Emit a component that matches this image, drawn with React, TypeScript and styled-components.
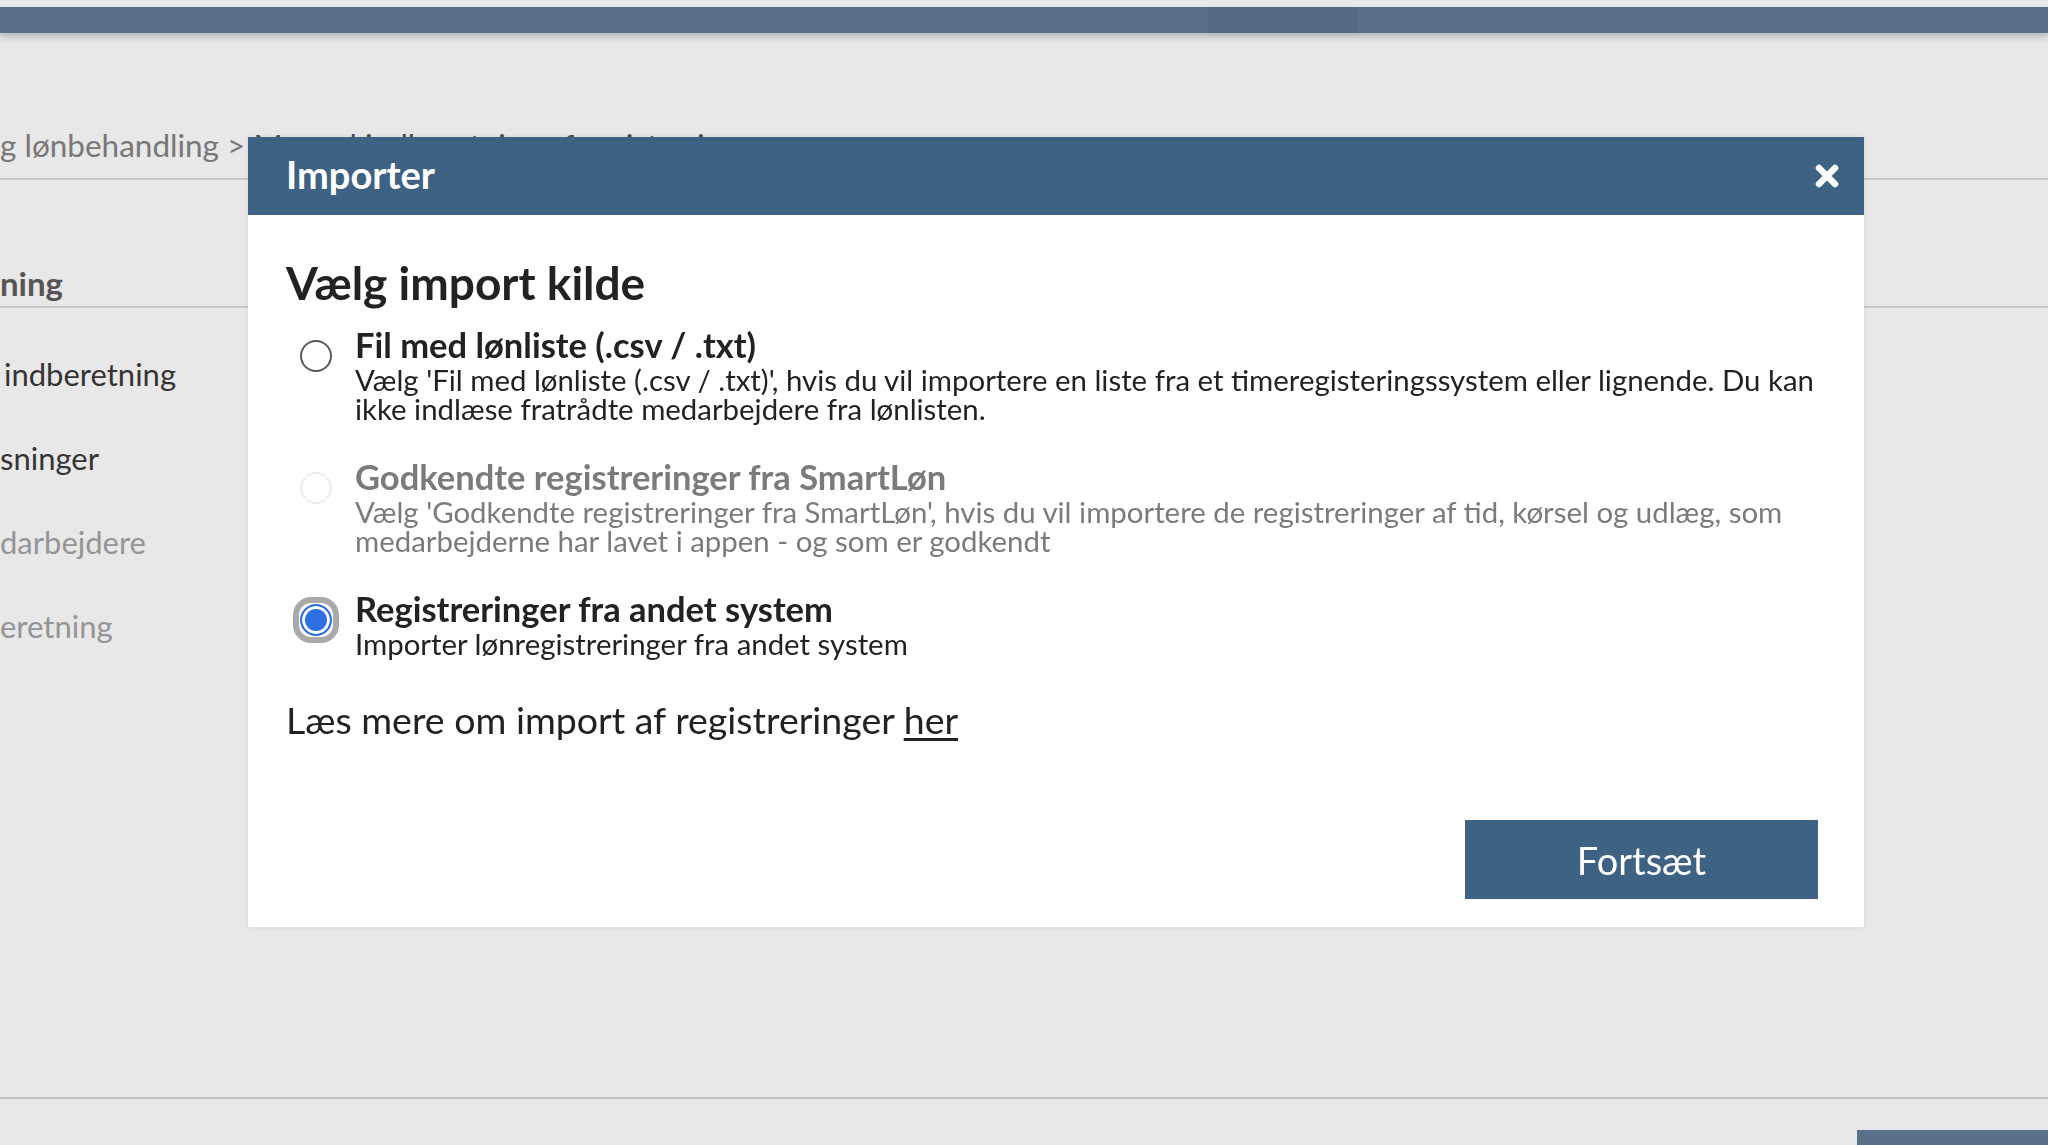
import styled, { createGlobalStyle } from 'styled-components';

const GlobalStyle = createGlobalStyle`
  html, body {
    margin: 0;
    padding: 0;
  }
  body {
    font-family: Lato, 'Open Sans', sans-serif;
    background: #ffffff;
    overflow: hidden;
  }
  * {
    box-sizing: border-box;
  }
`;

const menuItems = [
  { label: 'indberetning', muted: false, indent: 4 },
  { label: 'sninger', muted: false, indent: 0 },
  { label: 'darbejdere', muted: true, indent: 0 },
  { label: 'eretning', muted: true, indent: 0 },
];

const options = [
  {
    title: 'Fil med lønliste (.csv / .txt)',
    text: "Vælg 'Fil med lønliste (.csv / .txt)', hvis du vil importere en liste fra et timeregisteringssystem eller lignende. Du kan ikke indlæse fratrådte medarbejdere fra lønlisten.",
    checked: false,
    disabled: false,
  },
  {
    title: 'Godkendte registreringer fra SmartLøn',
    text: "Vælg 'Godkendte registreringer fra SmartLøn', hvis du vil importere de registreringer af tid, kørsel og udlæg, som medarbejderne har lavet i appen - og som er godkendt",
    checked: false,
    disabled: true,
  },
  {
    title: 'Registreringer fra andet system',
    text: 'Importer lønregistreringer fra andet system',
    checked: true,
    disabled: false,
  },
];

export default function App() {
  return (
    <>
      <GlobalStyle />
      <Page>
        <TopBar>
          <NavSegment />
          <NavSegment active />
          <NavSegment grow />
        </TopBar>
        <Breadcrumb>
          g lønbehandling &gt; <CrumbLink>Manuel indberetning af registreringer</CrumbLink>
        </Breadcrumb>
        <SectionTitle>ning</SectionTitle>
        <Menu>
          {menuItems.map(item => (
            <MenuItem key={item.label} muted={item.muted} indent={item.indent}>
              {item.label}
            </MenuItem>
          ))}
        </Menu>
        <PageFooter>
          <FooterButton />
        </PageFooter>
      </Page>

      <Overlay>
        <Modal>
          <ModalHeader>
            <ModalTitle>Importer</ModalTitle>
            <CloseButton aria-label="Luk">
              <svg width="26" height="26" viewBox="0 0 26 26">
                <path
                  d="M5 5 L21 21 M21 5 L5 21"
                  stroke="#ffffff"
                  strokeWidth="6.5"
                  strokeLinecap="round"
                />
              </svg>
            </CloseButton>
          </ModalHeader>
          <ModalBody>
            <Heading>Vælg import kilde</Heading>
            <OptionList>
              {options.map(opt => (
                <Option key={opt.title} disabled={opt.disabled}>
                  <Radio checked={opt.checked} disabled={opt.disabled} />
                  <div>
                    <OptionTitle>{opt.title}</OptionTitle>
                    <OptionText>{opt.text}</OptionText>
                  </div>
                </Option>
              ))}
            </OptionList>
            <ReadMore>
              Læs mere om import af registreringer <a href="#">her</a>
            </ReadMore>
            <ModalFooter>
              <PrimaryButton>Fortsæt</PrimaryButton>
            </ModalFooter>
          </ModalBody>
        </Modal>
      </Overlay>
    </>
  );
}

const Page = styled.div`
  height: 1145px;
  display: flex;
  flex-direction: column;
  padding-top: 7px;
`;

const TopBar = styled.div`
  height: 26px;
  display: flex;
  box-shadow: 0 4px 6px rgba(0, 0, 0, 0.22);
`;

const NavSegment = styled.div<{ active?: boolean; grow?: boolean }>`
  width: ${props => (props.active ? '150px' : '1208px')};
  flex: ${props => (props.grow ? 1 : 'none')};
  background: ${props => (props.active ? '#5d7592' : '#637b97')};
`;

const Breadcrumb = styled.div`
  height: 147px;
  display: flex;
  align-items: flex-end;
  padding-bottom: 15px;
  border-bottom: 2px solid #dcdcdc;
  font-size: 31.5px;
  line-height: 36px;
  color: #848484;
  white-space: pre;
`;

const CrumbLink = styled.span`
  color: #555555;
`;

const SectionTitle = styled.div`
  height: 128px;
  display: flex;
  align-items: flex-end;
  padding-bottom: 3px;
  border-bottom: 2px solid #dcdcdc;
  font-size: 33px;
  line-height: 40px;
  font-weight: 700;
  color: #5e5e5e;
`;

const Menu = styled.ul`
  list-style: none;
  margin: 0;
  padding: 24px 0 0;
`;

const MenuItem = styled.li<{ muted: boolean; indent: number }>`
  height: 84px;
  display: flex;
  align-items: center;
  padding-left: ${props => `${props.indent}px`};
  font-size: 31px;
  color: ${props => (props.muted ? '#a4a4a4' : '#3a3a3a')};
`;

const PageFooter = styled.div`
  margin-top: auto;
  height: 48px;
  border-top: 2px solid #d6d6d6;
  display: flex;
  justify-content: flex-end;
  align-items: flex-end;
`;

const FooterButton = styled.div`
  width: 191px;
  height: 15px;
  background: #637b97;
`;

const Overlay = styled.div`
  position: fixed;
  inset: 0;
  background: rgba(0, 0, 0, 0.09);
`;

const Modal = styled.div`
  position: absolute;
  left: 248px;
  top: 137px;
  width: 1616px;
  background: #ffffff;
  box-shadow: 0 0 6px rgba(0, 0, 0, 0.08);
`;

const ModalHeader = styled.div`
  height: 78px;
  background: #3d6283;
  display: flex;
  align-items: center;
  justify-content: space-between;
  padding: 0 24px 4px 38px;
`;

const ModalTitle = styled.h2`
  margin: 0;
  font-size: 38px;
  font-weight: 700;
  color: #ffffff;
`;

const CloseButton = styled.button`
  background: none;
  border: none;
  padding: 4px 0 0;
  display: flex;
  cursor: pointer;
`;

const ModalBody = styled.div`
  padding: 40px 46px 28px 38px;
`;

const Heading = styled.h1`
  margin: 0 0 17px;
  font-size: 46px;
  line-height: 55px;
  font-weight: 700;
  color: #222222;
`;

const OptionList = styled.div`
  display: flex;
  flex-direction: column;
  gap: 36px;
`;

const Option = styled.label<{ disabled: boolean }>`
  display: grid;
  grid-template-columns: 32px 1fr;
  column-gap: 23px;
  padding-left: 14px;
  color: ${props => (props.disabled ? '#7b7b7b' : '#222222')};
`;

const Radio = styled.span<{ checked: boolean; disabled: boolean }>`
  position: relative;
  width: 32px;
  height: 32px;
  margin-top: 13px;
  border-radius: 50%;
  border: 2px solid
    ${props => (props.checked ? '#2f6fe4' : props.disabled ? '#ececec' : '#5a5a5a')};
  background: ${props => (props.checked ? '#2f6fe4' : '#ffffff')};
  box-shadow: ${props => (props.checked ? 'inset 0 0 0 3px #ffffff' : 'none')};

  &::before {
    content: '';
    display: ${props => (props.checked ? 'block' : 'none')};
    position: absolute;
    inset: -9px;
    border: 6px solid #a9a9a9;
    border-radius: 18px;
  }
`;

const OptionTitle = styled.div`
  font-size: 34.5px;
  line-height: 36px;
  font-weight: 700;
`;

const OptionText = styled.div`
  margin-top: 2px;
  font-size: 29.4px;
  line-height: 29px;
`;

const ReadMore = styled.p`
  margin: 40px 0 0;
  font-size: 37.5px;
  line-height: 43px;
  color: #222222;
  a {
    color: #222222;
    text-decoration: underline;
    text-underline-offset: 4px;
  }
`;

const ModalFooter = styled.div`
  display: flex;
  justify-content: flex-end;
  margin-top: 79px;
`;

const PrimaryButton = styled.button`
  width: 353px;
  height: 79px;
  border: none;
  background: #3d6283;
  color: #ffffff;
  font-family: Lato, 'Open Sans', sans-serif;
  font-size: 38px;
  cursor: pointer;
`;
